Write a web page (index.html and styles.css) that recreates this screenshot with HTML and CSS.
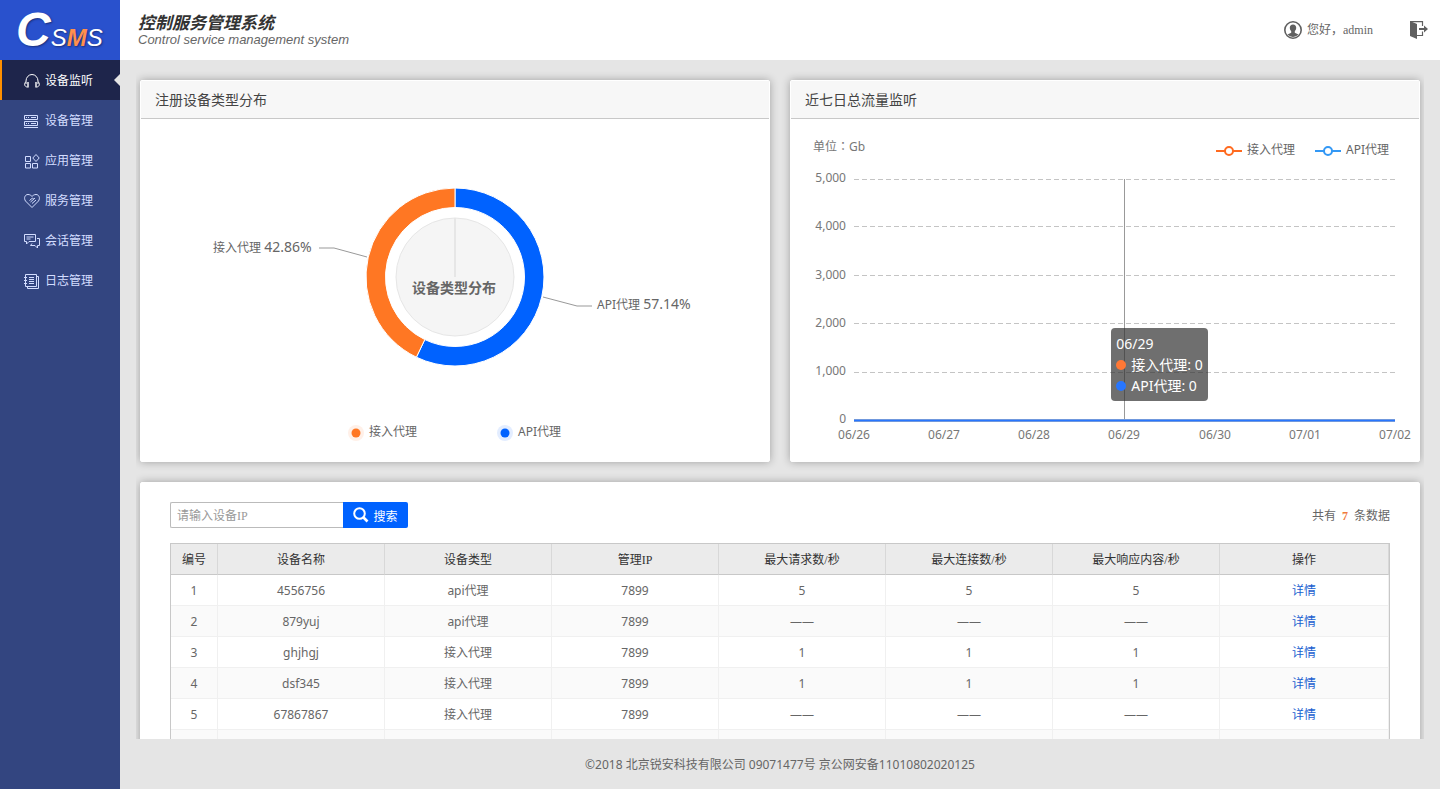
FILE: index.html
```html
<!DOCTYPE html>
<html lang="zh-CN">
<head>
<meta charset="utf-8">
<title>控制服务管理系统</title>
<link rel="stylesheet" href="styles.css">
</head>
<body>
<aside class="sidebar">
  <div class="logo"><span class="logo-c">C</span><span class="logo-s">S</span><span class="logo-m">M</span><span class="logo-s">S</span></div>
  <nav class="menu">
    <a class="menu-item active" href="#">
      <svg class="icon" viewBox="0 0 16 16"><path d="M2 11V8a6 6.500 0 0 1 12 0v3"/><path d="M4 9v5.500M12 9v5.500" stroke-width="1.400"/><path d="M3.500 14C0 14 0 9.500 2 9M12.500 14c3.500 0 3.500-4.500 1.500-5"/></svg>设备监听</a>
    <a class="menu-item" href="#">
      <svg class="icon" viewBox="0 0 16 16"><path d="M.5 2.500h13v4H.5zM.5 8.500h13v4H.5zM0 14.500h14M2 4.500h1M4 4.500h1M7 4.500h5M2 10.500h1M4 10.500h1M7 10.500h5"/></svg>设备管理</a>
    <a class="menu-item" href="#">
      <svg class="icon" viewBox="0 0 16 16"><path d="M1.500 3.500h5v5h-5zM1.500 10.500h5v4.500h-5zM8.500 10.500h5v4.500h-5zM12 1.500l3.200 3.500-3.200 3.500L8.800 5z"/></svg>应用管理</a>
    <a class="menu-item" href="#">
      <svg class="icon" viewBox="0 0 16 16"><path d="M8 14.500L1.500 8C-.5 5 1 1.500 4 1.500c2 0 3 1 4 2 1-1 2-2 4-2 3 0 4.500 3.500 2.500 6.500z"/><path d="M5.500 7.500L8.500 5l1 1M6.500 9L11 5M8 10.500L12 7"/></svg>服务管理</a>
    <a class="menu-item" href="#">
      <svg class="icon" viewBox="0 0 16 16"><path d="M.5 1.500h11v7H5L2.500 11V8.500h-2zM2.500 4h7M2.500 6h4M13 5.500h2.500v7h-2v2.500L11 12.500H6.500l1.500-2"/></svg>会话管理</a>
    <a class="menu-item" href="#">
      <svg class="icon" viewBox="0 0 16 16"><path d="M1.500 1.500h11v12h-11zM12.500 3.500h2v12h-11v-2M5 4.500h5M5 6.500h5M5 8.500h5M5 10.500h5M0 4.500h3M0 7.500h3M0 10.500h3"/></svg>日志管理</a>
  </nav>
</aside>
<div class="page">
  <header class="topbar">
    <div class="titles">
      <h1 class="title">控制服务管理系统</h1>
      <p class="subtitle">Control service management system</p>
    </div>
    <div class="user">
      <svg class="avatar" viewBox="0 0 18 18"><circle cx="9" cy="9" r="8.200" fill="none" stroke="#606060" stroke-width="1.600"/><path d="M9 3.500c2.200 0 3.300 1.400 3.200 3.600-.1 1.600-.8 2.500-1.400 3.100v1.500l3.700 1.800A7.500 7.500 0 0 1 3.500 13.500l3.700-1.800v-1.500c-.6-.6-1.300-1.500-1.400-3.100C5.700 4.900 6.800 3.500 9 3.500z" fill="#606060"/></svg>
      <span>您好，admin</span>
      <button class="exit" type="button" aria-label="退出"><svg viewBox="0 0 18 18"><path d="M0 0l7 3v15l-7-3z" fill="#606060"/><path d="M0 .7h12.500V5M12.500 10.500v4H7" fill="none" stroke="#606060" stroke-width="1.200"/><path d="M9 7h5V4.500L18 8l-4 3.500V9H9z" fill="#606060"/></svg></button>
    </div>
  </header>
  <main class="content">
    <div class="charts">
      <section class="card">
        <h2 class="card-title">注册设备类型分布</h2>
        <svg class="chart" viewBox="0 0 628 342">
          <path d="M314 69A89 89 0 1 1 275.400 238.200L283.800 220.600A69.500 69.500 0 1 0 314 88.500z" fill="#0062ff" stroke="#fff"/>
          <path d="M275.400 238.200A89 89 0 0 1 314 69V88.500A69.500 69.500 0 0 0 283.800 220.600z" fill="#ff7723" stroke="#fff"/>
          <circle cx="314" cy="158" r="59" fill="#f5f5f5" stroke="#e6e6e6"/>
          <path d="M314 99v59" stroke="#e6e6e6" stroke-width="2"/>
          <path class="lead" d="M178 129h15l33 9M402 178l34 9h15"/>
          <text class="hole" x="313" y="174">设备类型分布</text>
          <text x="72" y="133">接入代理 <tspan class="pct">42.86%</tspan></text>
          <text x="456" y="190">API代理 <tspan class="pct">57.14%</tspan></text>
          <circle cx="215" cy="314" r="8" fill="#fff0e8"/><circle cx="215" cy="314" r="4.500" fill="#ff7723"/>
          <text x="228" y="317">接入代理</text>
          <circle cx="364" cy="314" r="8" fill="#e3edff"/><circle cx="364" cy="314" r="4.500" fill="#0062ff"/>
          <text x="377" y="317">API代理</text>
        </svg>
      </section>
      <section class="card">
        <h2 class="card-title">近七日总流量监听</h2>
        <div class="plot">
          <svg class="chart" viewBox="0 0 628 342">
            <text class="tick unit" lang="zh-Hant" x="22" y="32">单位：Gb</text>
            <path d="M425 32h26" stroke="#ff6a1f" stroke-width="2"/><circle cx="438" cy="32" r="4" fill="#fff" stroke="#ff6a1f" stroke-width="2"/>
            <text x="456" y="35">接入代理</text>
            <path d="M524 32h26" stroke="#3398f5" stroke-width="2"/><circle cx="537" cy="32" r="4" fill="#fff" stroke="#3398f5" stroke-width="2"/>
            <text x="555" y="35">API代理</text>
            <path class="grid" d="M63 60.500h541M63 107.500h541M63 156.500h541M63 204.500h541M63 253.500h541"/>
            <path d="M333.500 60v241" stroke="#999"/>
            <path d="M63 301.500h541" stroke="#bbb" stroke-width="3"/>
            <path d="M63 301.500h541" stroke="#2776ff" stroke-width="2"/>
            <g class="tick end">
              <text x="55" y="63">5,000</text><text x="55" y="111">4,000</text><text x="55" y="160">3,000</text>
              <text x="55" y="208">2,000</text><text x="55" y="256">1,000</text><text x="55" y="304">0</text>
            </g>
            <g class="tick mid">
              <text x="63" y="320">06/26</text><text x="153" y="320">06/27</text><text x="243" y="320">06/28</text>
              <text x="333" y="320">06/29</text><text x="424" y="320">06/30</text><text x="514" y="320">07/01</text><text x="604" y="320">07/02</text>
            </g>
          </svg>
          <div class="tooltip">
            <div>06/29</div>
            <div><i class="dot orange"></i>接入代理: 0</div>
            <div><i class="dot blue"></i>API代理: 0</div>
          </div>
        </div>
      </section>
    </div>
    <section class="card list">
      <div class="toolbar">
        <form class="search">
          <input class="search-input" type="text" placeholder="请输入设备IP" aria-label="设备IP">
          <button class="search-btn" type="button"><svg viewBox="0 0 16 16"><circle cx="6.500" cy="6.500" r="5.300"/><path d="M10.500 10.500l4 4" stroke-width="2.600"/></svg>搜索</button>
        </form>
        <p class="total">共有 <b>7</b> 条数据</p>
      </div>
      <table class="table">
        <thead>
          <tr><th class="col-no">编号</th><th class="col">设备名称</th><th class="col">设备类型</th><th class="col">管理IP</th><th class="col">最大请求数/秒</th><th class="col">最大连接数/秒</th><th class="col">最大响应内容/秒</th><th>操作</th></tr>
        </thead>
        <tbody>
          <tr><td>1</td><td>4556756</td><td>api代理</td><td>7899</td><td>5</td><td>5</td><td>5</td><td><a href="#">详情</a></td></tr>
          <tr><td>2</td><td>879yuj</td><td>api代理</td><td>7899</td><td>——</td><td>——</td><td>——</td><td><a href="#">详情</a></td></tr>
          <tr><td>3</td><td>ghjhgj</td><td>接入代理</td><td>7899</td><td>1</td><td>1</td><td>1</td><td><a href="#">详情</a></td></tr>
          <tr><td>4</td><td>dsf345</td><td>接入代理</td><td>7899</td><td>1</td><td>1</td><td>1</td><td><a href="#">详情</a></td></tr>
          <tr><td>5</td><td>67867867</td><td>接入代理</td><td>7899</td><td>——</td><td>——</td><td>——</td><td><a href="#">详情</a></td></tr>
          <tr><td></td><td></td><td></td><td></td><td></td><td></td><td></td><td></td></tr>
        </tbody>
      </table>
    </section>
  </main>
  <footer class="footer">©2018 北京锐安科技有限公司 09071477号 京公网安备11010802020125</footer>
</div>
</body>
</html>
```
FILE: styles.css
```css
* { box-sizing: border-box; }
body {
  margin: 0;
  height: 100vh;
  display: flex;
  overflow: hidden;
  background: #e5e5e5;
  color: #666;
  font: 12px/20px "Noto Sans", "Noto Sans CJK SC", sans-serif;
}
h1, h2, p { margin: 0; }
a { text-decoration: none; }
button { border: 0; padding: 0; cursor: pointer; }

.sidebar { width: 120px; flex: none; background: #334580; }
.logo {
  height: 60px;
  padding-left: 16px;
  display: flex;
  align-items: baseline;
  background: #2951cd;
  color: #fff;
  font: italic 24px/60px "Liberation Sans", Arial, sans-serif;
  text-shadow: 1px 1px 2px #1a2f7a;
}
.logo-c { font-size: 48px; font-weight: bold; }
.logo-m { color: #ff8f4d; font-weight: bold; }
.menu-item {
  height: 40px;
  padding-left: 24px;
  display: flex;
  align-items: center;
  gap: 5px;
  color: #d3ddff;
  line-height: 40px;
  padding-top: 1px;
}
.menu-item.active {
  position: relative;
  padding-left: 22px;
  border-left: 2px solid #ff9000;
  background: #1e254b;
  color: #fff;
}
.menu-item.active::after {
  content: "";
  position: absolute;
  right: 0;
  top: 14px;
  border: 6px solid transparent;
  border-left: 0;
  border-right-color: #e5e5e5;
}
.icon { width: 16px; height: 16px; fill: none; stroke: currentColor; stroke-width: 1; }

.page { flex: 1; min-width: 0; display: flex; flex-direction: column; }
.topbar {
  flex: none;
  height: 60px;
  padding: 0 12px 0 18px;
  display: flex;
  justify-content: space-between;
  align-items: center;
  background: #fff;
}
.titles { padding-top: 2px; }
.title { color: #333; font-size: 17px; line-height: 18px; font-style: italic; font-weight: bold; }
.subtitle { font: italic 13px/16px "Liberation Sans", Arial, sans-serif; }
.user {
  display: flex;
  align-items: center;
  gap: 5px;
  font-family: "Liberation Serif", "Noto Sans CJK SC", serif;
}
.avatar { width: 18px; height: 18px; }
.exit { margin-left: 32px; width: 18px; height: 18px; background: none; }
.exit svg { display: block; }

.content { flex: 1; min-height: 0; margin: 0 16px; padding: 20px 4px 0; overflow: hidden; }
.charts { display: grid; grid-template-columns: 1fr 1fr; gap: 20px; margin-bottom: 20px; }
.card { border: 1px solid #fff; border-radius: 2px; background: #fff; box-shadow: 0 0 8px rgba(0, 0, 0, .3); }
.card-title {
  height: 38px;
  padding-left: 14px;
  border-bottom: 1px solid #c8c8c8;
  background: #f7f7f7;
  color: #444;
  font-size: 14px;
  line-height: 38px;
  font-weight: normal;
}
.plot { position: relative; }
.chart { display: block; width: 100%; }
.chart text { fill: #666; font-size: 12px; }
.chart .pct { font-size: 14px; }
.chart .hole { font-size: 14px; font-weight: bold; text-anchor: middle; }
.chart .tick, .chart .tick text { fill: #777; }
.unit { font-family: "Noto Sans", "Noto Sans CJK TC", sans-serif; }
.end { text-anchor: end; }
.mid { text-anchor: middle; }
.lead { fill: none; stroke: #999; }
.grid { stroke: #c4c4c4; stroke-dasharray: 5 3; }
.tooltip {
  position: absolute;
  left: 51%;
  top: 61%;
  padding: 5px;
  border-radius: 4px;
  background: rgba(50, 50, 50, .7);
  color: #fff;
  font-size: 14px;
  line-height: 21px;
  white-space: nowrap;
}
.dot { display: inline-block; width: 10px; height: 10px; margin-right: 5px; border-radius: 50%; }
.orange { background: #ff7835; }
.blue { background: #2776ff; }

.list { padding: 19px 29px; }
.toolbar { display: flex; justify-content: space-between; align-items: center; margin-bottom: 15px; }
.search { display: flex; }
.search-input {
  width: 173px;
  height: 26px;
  padding: 2px 6px 0;
  border: 1px solid #bbb;
  border-right: 0;
  border-radius: 2px 0 0 2px;
  font: 12px "Liberation Serif", "Noto Sans CJK SC", serif;
}
.search-input::placeholder { color: #999; }
.search-btn {
  width: 65px;
  height: 26px;
  display: flex;
  align-items: center;
  justify-content: center;
  gap: 4px;
  border-radius: 0 2px 2px 0;
  background: #0062ff;
  color: #fff;
  font: 12px "Noto Sans CJK SC", sans-serif;
}
.search-btn svg { width: 16px; height: 16px; fill: none; stroke: #fff; stroke-width: 2; }
.total { padding-top: 2px; font-family: "Liberation Serif", "Noto Sans CJK SC", serif; }
.total b { margin: 0 3px; color: #f07a3c; }
.table {
  width: 100%;
  table-layout: fixed;
  border: 1px solid #c8c8c8;
  border-bottom: 0;
  border-collapse: separate;
  border-spacing: 0;
  text-align: center;
}
.col-no { width: 47px; }
.col { width: 167px; }
.table th {
  height: 31px;
  padding: 2px 0 0;
  border-right: 1px solid #d8d8d8;
  border-bottom: 1px solid #c8c8c8;
  background: #ebebeb;
  color: #333;
  font-family: "Liberation Serif", "Noto Sans CJK SC", serif;
  font-weight: normal;
}
.table td { height: 31px; padding: 2px 0 0; border-right: 1px solid #f0f0f0; border-bottom: 1px solid #f0f0f0; }
.table tbody tr:nth-child(even) { background: #fafafa; }
.table a { color: #1a5fd0; }
.footer { flex: none; height: 50px; line-height: 52px; text-align: center; }
```
